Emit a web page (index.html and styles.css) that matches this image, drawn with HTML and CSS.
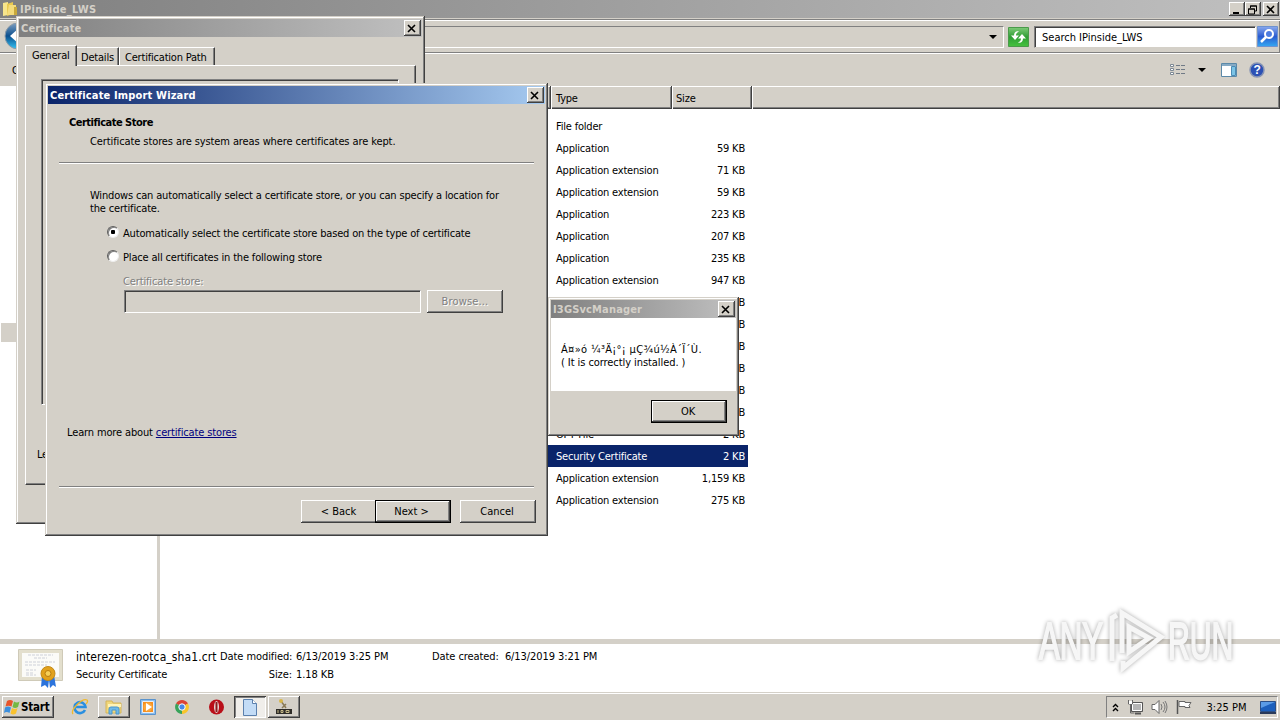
FILE: index.html
```html
<!DOCTYPE html>
<html lang="en">
<head>
    <meta charset="UTF-8">
    <title>IPinside_LWS</title>
    <link rel="stylesheet" href="styles.css">
</head>
<body>
    <div class="explorer">
        <div class="titlebar inactive main-title">
            <svg class="folder" width="17" height="16" viewBox="0 0 17 16"><path d="M1 2l5-1v13l-5 1z" fill="#f7e58b"/><path d="M5 3l6-2v12l-6 2z" fill="#e9c94f"/><path d="M7 4h7v10H5z" fill="#f4dc7c"/><path d="M12 6h3v8h-3z" fill="#c9a93b"/></svg>
            <span class="title">IPinside_LWS</span>
            <button class="cap"><svg width="12" height="10"><path d="M2 8h6" stroke="#000" stroke-width="2"/></svg></button>
            <button class="cap"><svg width="12" height="10"><path d="M3.5 3V1h6v5H8M3 1h7M1.500 4v5h6V4zM1 4h7" fill="none" stroke="#000"/></svg></button>
            <button class="cap last"><svg width="12" height="10"><path d="M2 1l7 7M9 1l-7 7" stroke="#000" stroke-width="1.600"/></svg></button>
        </div>
        <div class="address">
            <svg class="back" width="34" height="34" viewBox="0 0 34 34"><defs><linearGradient id="bk" x2="0" y2="1"><stop offset="0" stop-color="#7f9fc0"/><stop offset=".5" stop-color="#0b4f8e"/><stop offset="1" stop-color="#35c3f3"/></linearGradient></defs><circle cx="17" cy="17" r="13" fill="url(#bk)" stroke="#8a9aa8"/><path d="M18 9l-9 8 9 8v-5h8v-6h-8z" fill="#fff"/></svg>
            <div class="path"><i class="arrow"></i></div>
            <svg class="refresh" width="21" height="20" viewBox="0 0 21 20"><defs><linearGradient id="gr" x2="0" y2="1"><stop offset="0" stop-color="#7fca78"/><stop offset=".5" stop-color="#2f9e35"/><stop offset="1" stop-color="#45c23e"/></linearGradient></defs><path d="M.5.5h20v19H.5z" fill="url(#gr)" stroke="#4a9a4a"/><path d="M11 4.500C8 3.500 6 5.500 6 8.500H3l4 4.500 4-4.500H8c0-2 1-3 3-4zM10 15.500c3 1 5-1 5-4h3l-4-4.500-4 4.500h3c0 2-1 3-3 4z" fill="#fff"/></svg>
            <div class="search">Search IPinside_LWS</div>
            <svg class="lens" width="21" height="22" viewBox="0 0 21 22"><defs><linearGradient id="bl" x2="0" y2="1"><stop offset="0" stop-color="#8aa9ee"/><stop offset=".5" stop-color="#2a5bd0"/><stop offset="1" stop-color="#35a8f2"/></linearGradient></defs><path d="M.5.500h20v20H.5z" fill="url(#bl)" stroke="#6e92cf"/><circle cx="12" cy="8" r="4" fill="#4d7ce0" stroke="#fff" stroke-width="2"/><path d="M9 11l-5 5" stroke="#fff" stroke-width="2.500"/></svg>
        </div>
        <div class="toolbar">
            <span class="organize">Organize</span>
            <svg width="16" height="14" viewBox="0 0 16 14"><path d="M.5 1.500h3v2h-3zM.5 5.500h3v2h-3zM.5 9.500h3v2h-3z" fill="#fff" stroke="#7c8894"/><path d="M6 2.500h4M11 2.500h4M6 6.500h4M11 6.500h4M6 10.500h4M11 10.500h4" stroke="#707a86"/></svg>
            <i class="arrow"></i>
            <svg class="preview" width="16" height="14" viewBox="0 0 16 14"><path d="M.5.500h15v13H.5z" fill="#fff" stroke="#5b89a8"/><path d="M1 1h14v2H1z" fill="#86aac4"/><path d="M10.500 3.500h4v9h-4z" fill="#7cc4e6" stroke="#4a8bb5"/></svg>
            <svg class="help" width="16" height="16" viewBox="0 0 16 16"><circle cx="8" cy="8" r="7" fill="#2b50b4" stroke="#8794b4" stroke-width="1.500"/><text x="8" y="12" text-anchor="middle" class="qm">?</text></svg>
        </div>
        <div class="main">
            <div class="nav"><div class="navsel"></div></div>
            <div class="list">
                <div class="thead"><div class="th name"></div><div class="th type">Type</div><div class="th size">Size</div><div class="th rest"></div></div>
                <div class="rows">
                    <div class="row"><span>File folder</span></div>
                    <div class="row"><span>Application</span><b>59 KB</b></div>
                    <div class="row"><span>Application extension</span><b>71 KB</b></div>
                    <div class="row"><span>Application extension</span><b>59 KB</b></div>
                    <div class="row"><span>Application</span><b>223 KB</b></div>
                    <div class="row"><span>Application</span><b>207 KB</b></div>
                    <div class="row"><span>Application</span><b>235 KB</b></div>
                    <div class="row"><span>Application extension</span><b>947 KB</b></div>
                    <div class="row"><b>KB</b></div>
                    <div class="row"><b>KB</b></div>
                    <div class="row"><b>KB</b></div>
                    <div class="row"><b>KB</b></div>
                    <div class="row"><b>KB</b></div>
                    <div class="row"><b>KB</b></div>
                    <div class="row"><span>OPT File</span><b>2 KB</b></div>
                    <div class="row selected"><span>Security Certificate</span><b>2 KB</b></div>
                    <div class="row"><span>Application extension</span><b>1,159 KB</b></div>
                    <div class="row"><span>Application extension</span><b>275 KB</b></div>
                </div>
            </div>
        </div>
        <div class="details">
            <svg class="cert-icon" width="48" height="42" viewBox="0 0 48 42"><path d="M1.500 1.500h44v31h-44z" fill="#e3dfcd" stroke="#cfcab8"/><path d="M5 5h37v24H5z" fill="#fbfbf8"/><path d="M11 7h25M17 10h13M8 14h30M8 17h22M9 22h10M9 25h7M9 27h10" stroke="#ced1d9" stroke-dasharray="3 1"/><path d="M25 28l-1 11 4-2 3 3 1-8 1 8 3-3 3 2-2-12z" fill="#2c74dc"/><circle cx="31" cy="25.500" r="7" fill="#e2a21d" stroke="#c38a18"/><circle cx="31" cy="25.500" r="3" fill="#f6cf58" stroke="#b87c10"/></svg>
            <div class="d1"><div class="fname">interezen-rootca_sha1.crt</div><div>Security Certificate</div></div>
            <div class="d2"><span>Date modified:</span><span>6/13/2019 3:25 PM</span><span>Size:</span><span>1.18 KB</span></div>
            <div class="d3">Date created:&nbsp; 6/13/2019 3:21 PM</div>
        </div>
    </div>

    <div class="window cert">
        <div class="titlebar inactive"><span class="title">Certificate</span><button class="cap"><svg width="12" height="10"><path d="M2 1l7 7M9 1l-7 7" stroke="#000" stroke-width="1.600"/></svg></button></div>
        <div class="tabs"><div class="tab on">General</div><div class="tab">Details</div><div class="tab wide">Certification Path</div></div>
        <div class="panel"><div class="sunken"></div><p>Learn more about</p></div>
    </div>

    <div class="window wizard">
        <div class="titlebar active"><span class="title">Certificate Import Wizard</span><button class="cap"><svg width="12" height="10"><path d="M2 1l7 7M9 1l-7 7" stroke="#000" stroke-width="1.600"/></svg></button></div>
        <h2>Certificate Store</h2>
        <p class="sub">Certificate stores are system areas where certificates are kept.</p>
        <div class="rule"></div>
        <p class="intro">Windows can automatically select a certificate store, or you can specify a location for<br>the certificate.</p>
        <div class="option"><i class="radio checked"></i><span>Automatically select the certificate store based on the type of certificate</span></div>
        <div class="option"><i class="radio"></i><span>Place all certificates in the following store</span></div>
        <p class="disabled label">Certificate store:</p>
        <div class="field"><div class="input"></div><button class="btn disabled">Browse...</button></div>
        <p class="learn">Learn more about <a>certificate stores</a></p>
        <div class="rule"></div>
        <div class="buttons"><button class="btn">&lt; Back</button><button class="btn default">Next &gt;</button><button class="btn cancel">Cancel</button></div>
    </div>

    <div class="window msgbox">
        <div class="titlebar inactive"><span class="title">I3GSvcManager</span><button class="cap"><svg width="12" height="10"><path d="M2 1l7 7M9 1l-7 7" stroke="#000" stroke-width="1.600"/></svg></button></div>
        <div class="message"><span class="garbled">Á¤»ó ¼³Ä¡°¡ µÇ¾ú½À´Ï´Ù.</span><br>( It is correctly installed. )</div>
        <div class="foot"><button class="btn default">OK</button></div>
    </div>

    <svg class="watermark" width="230" height="76" viewBox="0 0 230 76">
        <g>
            <text transform="translate(8 56) scale(.6 1)">ANY</text>
            <text transform="translate(137 56) scale(.58 1)">RUN</text>
            <path d="M81 58V15l5-3M91 50V10l39 24-38 31V58"/>
            <path d="M98 49V24l20 11z"/>
        </g>
    </svg>

    <div class="taskbar">
        <button class="start"><svg width="16" height="16" viewBox="0 0 16 16"><path d="M3 2q3-2 6 0L7.500 7.500Q4.500 6 1.500 7.500z" fill="#e8542a"/><path d="M10 2.500q3 2 5.500 0L14 8q-3 2-5.500 0z" fill="#74b843"/><path d="M1 8.500q3-2 6 0L5.500 14q-3-2-5.500 0z" fill="#3c8fdd"/><path d="M8 9q3 2 5.500 0l-1.500 5.500q-3 2-5.500 0z" fill="#f9c22e"/></svg>Start</button>
        <div class="task ie"><svg width="18" height="18" viewBox="0 0 18 18"><path d="M14 12a5.500 5.500 0 1 1 .5-3H5" fill="none" stroke="#2a8fe0" stroke-width="2.600"/><path d="M2 16C-1 12 11 0 16 2c1 1 0 3-1 4" fill="none" stroke="#f0b92c" stroke-width="1.300"/></svg></div>
        <div class="task raised"><svg width="18" height="18" viewBox="0 0 18 18"><path d="M1 3h6l1 2h8v10H1z" fill="#f0d77b" stroke="#d4b45a"/><path d="M3 6h13v3H3z" fill="#fff3b8"/><path d="M4 16v-5q0-2 2-2h6q2 0 2 2v5h-3v-4H7v4z" fill="#6fb9e8" stroke="#4b95cc"/></svg></div>
        <div class="task"><svg width="16" height="16" viewBox="0 0 16 16"><path d="M.5.500h15v15H.5z" fill="#8abdee" stroke="#5a93cc"/><path d="M2.500 2.500h11v11h-11z" fill="#f78f1e" stroke="#e8eef5"/><circle cx="8" cy="8" r="4.500" fill="#f9a73e"/><path d="M6 4l6 4-6 4z" fill="#fff"/></svg></div>
        <div class="task"><svg width="14" height="14" viewBox="0 0 14 14"><path d="M7 7L1 3.500A7 7 0 0 1 13 3.500z" fill="#dc4335"/><path d="M7 7l6-3.500A7 7 0 0 1 7 14z" fill="#f8c52c"/><path d="M7 7v7A7 7 0 0 1 1 3.500z" fill="#38a35a"/><circle cx="7" cy="7" r="3.200" fill="#4788e8" stroke="#fff"/></svg></div>
        <div class="task"><svg width="15" height="16" viewBox="0 0 15 16"><circle cx="7.500" cy="8" r="7.500" fill="#b90f19"/><ellipse cx="7.500" cy="8" rx="2.500" ry="6" fill="#e8d8d4"/><path d="M7.500 3v10" stroke="#8d1a1e" stroke-width="2"/></svg></div>
        <div class="task pressed"><svg width="14" height="17" viewBox="0 0 14 17"><path d="M.5.500h9l4 4v12H.5z" fill="#c3dcf6" stroke="#5b80ad"/><path d="M9.500.500v4h4" fill="#fff" stroke="#5b80ad"/></svg></div>
        <div class="task raised"><svg width="18" height="18" viewBox="0 0 18 18"><path d="M6 3l5 7M11 6l-4 4" stroke="#8a7b58" stroke-width="1.500"/><circle cx="6" cy="3" r="2" fill="#d7b64a"/><path d="M1 11h16v5H1z" fill="#2e2c28"/><path d="M3 12v3M6 12.500h2v2H6zM11 12.500h3v2h-3z" stroke="#c9bc8b" fill="none"/></svg></div>
        <div class="tray">
            <svg class="chev" width="7" height="9" viewBox="0 0 7 9"><path d="M1 4l2.500-2.500L6 4M1 8l2.500-2.500L6 8" fill="none" stroke="#000" stroke-width="1.400"/></svg>
            <svg width="16" height="16" viewBox="0 0 16 16"><path d="M4.500 3.500h11v9h-11z" fill="#aaa" stroke="#555"/><path d="M5.500 4.500h9v7h-9z" fill="#b5b5b5" stroke="#fff"/><path d="M8 14.500h6" stroke="#555" stroke-width="2"/><path d="M1.500 1v4h4V1M3.500 5v9h4" fill="none" stroke="#666"/><path d="M2 2h3v3H2z" fill="#fff"/></svg>
            <svg width="17" height="16" viewBox="0 0 17 16"><path d="M1 5.500h3l4-4v13l-4-4H1z" fill="#fff" stroke="#666"/><path d="M10 5q2 3 0 6M12 3q4 5 0 10M14 2q4 6 0 12" fill="none" stroke="#777"/></svg>
            <svg width="17" height="16" viewBox="0 0 17 16"><path d="M1.500 1v14" stroke="#555" stroke-width="1.500"/><path d="M3 2.500h6v1h6l-2 3 1 2H9v-1H3z" fill="#fff" stroke="#666"/></svg>
            <span class="clock">3:25 PM</span>
            <svg class="desk" width="16" height="13" viewBox="0 0 16 13"><path d="M.5.500h15v10H.5z" fill="#1c5fbc" stroke="#2b4f87"/><path d="M1 1h14L1 7z" fill="#5a9be6"/><path d="M0 11h16v2H0z" fill="#2a3a5a"/></svg>
        </div>
    </div>
</body>
</html>
```
FILE: styles.css
```css
* {
    box-sizing: border-box;
}
body {
    margin: 0;
    width: 1280px;
    height: 720px;
    overflow: hidden;
    position: relative;
    background: #fff;
    color: #000;
    font: 11px/13px "DejaVu Sans Condensed", "DejaVu Sans", sans-serif;
    letter-spacing: -0.2px;
}
p, h2 {
    margin: 0;
}
svg {
    display: block;
    flex: none;
}
button {
    font: inherit;
    letter-spacing: inherit;
    color: inherit;
    padding: 0;
    border: 0;
}
.titlebar {
    display: flex;
    align-items: center;
    height: 18px;
    padding: 0 1px;
}
.titlebar.inactive {
    background: linear-gradient(90deg, #808080, #c0c0c0);
    color: #d4d0c8;
}
.titlebar.active {
    background: linear-gradient(90deg, #0a246a, #a6caf0);
    color: #fff;
}
.title {
    flex: 1;
    font-weight: bold;
    letter-spacing: 0.16px;
    white-space: nowrap;
}
.cap {
    width: 16px;
    height: 14px;
    padding: 1px 0 0 2px;
    background: #d4d0c8;
    box-shadow: inset -1px -1px #404040, inset 1px 1px #fff, inset -2px -2px #808080;
}
.arrow {
    border: 4px solid transparent;
    border-top-color: #000;
    border-bottom: 0;
}

/* explorer */
.explorer {
    height: 693px;
    display: flex;
    flex-direction: column;
}
.main-title {
    padding-left: 2px;
}
.main-title .title {
    letter-spacing: 0.3px;
}
.main-title .cap.last {
    margin-left: 2px;
}
.folder {
    margin-right: 1px;
}
.address {
    height: 36px;
    display: flex;
    align-items: center;
    background: #d4d0c8;
    border-top: 1px solid #d4d0c8;
    border-bottom: 1px solid #fff;
    box-shadow: inset 0 1px #808080, inset 0 2px #fff, inset 0 -1px #808080, inset -1px 0 #808080;
    padding-right: 2px;
}
.back {
    margin-left: 1px;
}
.path {
    flex: 1;
    height: 22px;
    margin: 2px 4px 0 0;
    padding-right: 6px;
    display: flex;
    align-items: center;
    justify-content: flex-end;
    border: 1px solid #808080;
    border-right-color: #fff;
    border-bottom-color: #fff;
}
.refresh {
    margin: 1px 5px 0 0;
}
.search {
    width: 222px;
    height: 22px;
    margin: 2px 1px 0 0;
    padding: 4px 7px;
    letter-spacing: 0;
    background: #fff;
    border: 1px solid #808080;
    border-right-color: #fff;
    border-bottom-color: #d4d0c8;
    box-shadow: inset 1px 1px #404040;
}
.lens {
    margin-top: 2px;
}
.toolbar {
    height: 32px;
    display: flex;
    align-items: center;
    background: #d4d0c8;
    padding: 0 15px 0 12px;
}
.organize {
    flex: 1;
}
.toolbar .arrow {
    margin: 0 15px 0 12px;
}
.preview {
    margin-right: 12px;
}
.qm {
    font: bold 12px "Liberation Sans", sans-serif;
    fill: #fff;
}
.main {
    height: 553px;
    display: flex;
}
.nav {
    width: 160px;
    border-right: 3px solid #d4d0c8;
    padding: 237px 0 0 1px;
}
.navsel {
    height: 19px;
    background: #d4d0c8;
}
.list {
    flex: 1;
}
.thead {
    height: 23px;
    display: flex;
    background: #d4d0c8;
}
.th {
    padding: 6px 5px;
    border-right: 1px solid #404040;
    box-shadow: inset 0 1px #fff, inset 1px 0 #fff, inset 0 -1px #404040, inset 0 -2px #808080, inset -1px 0 #808080;
}
.th.name {
    width: 391px;
}
.th.type {
    width: 121px;
}
.th.size {
    width: 80px;
    padding-left: 4px;
}
.th.rest {
    flex: 1;
}
.rows {
    width: 588px;
    padding-top: 6px;
}
.row {
    height: 22px;
    padding: 5px 3px 0 396px;
    display: flex;
    white-space: nowrap;
}
.row b {
    margin-left: auto;
    font-weight: normal;
}
.row.selected {
    background: #0a246a;
    color: #fff;
}
.details {
    flex: 1;
    display: flex;
    border-top: 5px solid #d4d0c8;
    border-bottom: 1px solid #d4d0c8;
    padding: 4px 0 0 17px;
    line-height: 18px;
    white-space: nowrap;
}
.cert-icon {
    margin: 0 11px 0 0;
}
.d1 {
    width: 144px;
}
.fname {
    font-size: 12px;
    letter-spacing: 0.1px;
}
.d2 {
    display: grid;
    grid-template-columns: 72px 132px;
    grid-template-rows: 18px 18px;
    column-gap: 4px;
}
.d2 span:nth-child(odd) {
    text-align: right;
}
.d2, .d3 {
    letter-spacing: -0.08px;
    margin-right: 4px;
}

/* dialogs */
.window {
    position: absolute;
    background: #d4d0c8;
    padding: 3px;
    box-shadow: inset -1px -1px #404040, inset 1px 1px #d4d0c8, inset -2px -2px #808080, inset 2px 2px #fff;
}
.window .cap {
    width: 17px;
    height: 16px;
    padding: 2px 0 0 2px;
}
.cert {
    left: 16px;
    top: 16px;
    width: 409px;
    height: 508px;
}
.cert .title {
    padding-left: 1px;
}
.tabs {
    display: flex;
    align-items: flex-end;
    height: 28px;
    padding-left: 6px;
}
.tab {
    height: 18px;
    width: 42px;
    padding: 3px 0 0 4px;
    white-space: nowrap;
    border-top: 1px solid #fff;
    border-right: 1px solid #404040;
    box-shadow: inset -1px 0 #808080;
}
.tab.on {
    width: 52px;
    height: 21px;
    padding: 3px 0 0 6px;
    margin-bottom: -1px;
    background: #d4d0c8;
    border-left: 1px solid #fff;
    position: relative;
}
.tab.wide {
    width: 96px;
    padding-left: 5px;
    border-left: 1px solid #fff;
}
.panel {
    margin: 0 6px;
    height: 420px;
    border: 1px solid #fff;
    border-right-color: #404040;
    border-bottom-color: #404040;
    box-shadow: inset -1px -1px #808080;
    padding: 13px 16px 0 15px;
}
.sunken {
    height: 326px;
    border: 1px solid #808080;
    border-bottom-color: #fff;
    border-right-color: #fff;
    box-shadow: inset 1px 1px #404040;
}
.panel p {
    margin: 43px 0 0 -4px;
}
.wizard {
    left: 45px;
    top: 83px;
    width: 503px;
    height: 453px;
    letter-spacing: -0.14px;
}
.wizard .title, .msgbox .title {
    padding-left: 1px;
}
.wizard h2 {
    font-size: 11px;
    line-height: 13px;
    letter-spacing: -0.5px;
    margin: 12px 0 6px 21px;
}
.sub, .intro {
    margin-left: 42px;
    white-space: nowrap;
}
.sub {
    letter-spacing: -0.1px;
}
.intro, .option {
    letter-spacing: -0.17px;
}
.rule {
    height: 2px;
    margin: 14px 11px 25px 11px;
    background: #808080;
    border-bottom: 1px solid #fff;
}
.option {
    height: 24px;
    margin-left: 59px;
    display: flex;
    align-items: center;
    white-space: nowrap;
}
.intro + .option {
    margin-top: 6px;
}
.radio {
    width: 12px;
    height: 12px;
    margin: -2px 4px 0 0;
    border-radius: 50%;
    background: #fff;
    border: 1px solid;
    border-color: #606060 #eee #eee #606060;
    box-shadow: inset 1px 1px #808080;
}
.radio.checked {
    background: radial-gradient(circle, #000 0 2px, #fff 2.5px);
}
.disabled {
    color: #808080;
    text-shadow: 1px 1px #fff;
}
.label {
    margin: 6px 0 2px 75px;
}
.field {
    display: flex;
    margin-left: 76px;
}
.input {
    width: 297px;
    height: 23px;
    margin-right: 6px;
    border: 1px solid #808080;
    border-right-color: #fff;
    border-bottom-color: #fff;
    box-shadow: inset 1px 1px #404040;
}
.btn {
    width: 76px;
    height: 23px;
    background: #d4d0c8;
    box-shadow: inset -1px -1px #404040, inset 1px 1px #fff, inset -2px -2px #808080;
}
.btn.disabled {
    letter-spacing: 0.15px;
}
.btn.default {
    box-shadow: inset 0 0 0 1px #000, inset -2px -2px #404040, inset 2px 2px #fff, inset -3px -3px #808080;
}
.learn {
    margin: 113px 0 0 19px;
}
.learn a {
    color: #00007f;
    text-decoration: underline;
}
.learn + .rule {
    margin-top: 47px;
    margin-bottom: 12px;
}
.buttons {
    display: flex;
    justify-content: flex-end;
    padding-right: 9px;
    letter-spacing: 0;
}
.buttons .btn {
    padding-right: 1px;
}
.buttons .default {
    margin-left: -2px;
    padding-right: 3px;
}
.buttons .cancel {
    margin-left: 9px;
    padding-right: 2px;
}
.msgbox {
    left: 548px;
    top: 297px;
    width: 191px;
    height: 139px;
}
.message {
    height: 73px;
    padding: 25px 0 0 10px;
    background: #fff;
    letter-spacing: -0.07px;
    white-space: nowrap;
}
.garbled {
    letter-spacing: 0.33px;
}
.foot {
    padding: 9px 9px 0 0;
    display: flex;
    justify-content: flex-end;
}
.foot .btn {
    padding-right: 2px;
}

.watermark {
    position: absolute;
    left: 1031px;
    top: 603px;
}
.watermark g {
    filter: drop-shadow(0 0 2px rgba(0, 0, 0, 0.35));
}
.watermark text {
    font: 52px "Liberation Sans", sans-serif;
    fill: #f6f6f6;
    stroke: #f6f6f6;
    stroke-width: 2px;
    letter-spacing: 0;
}
.watermark path {
    fill: none;
    stroke: #f6f6f6;
    stroke-width: 5px;
}

/* taskbar */
.taskbar {
    height: 27px;
    display: flex;
    align-items: center;
    background: #d4d0c8;
    border-top: 1px solid #fff;
    padding: 0 2px;
}
.start {
    width: 52px;
    height: 22px;
    margin-right: 10px;
    display: flex;
    align-items: center;
    gap: 1px;
    padding-left: 2px;
    font-weight: bold;
    font-size: 11.5px;
    background: #d4d0c8;
    box-shadow: inset -1px -1px #404040, inset 1px 1px #fff, inset -2px -2px #808080;
}
.task {
    width: 32px;
    height: 22px;
    margin-right: 2px;
    display: flex;
    align-items: center;
    justify-content: center;
}
.raised {
    box-shadow: inset -1px -1px #404040, inset 1px 1px #fff, inset -2px -2px #808080;
}
.pressed {
    background: #f0eeea;
    box-shadow: inset 1px 1px #404040, inset -1px -1px #fff, inset 2px 2px #808080;
}
.tray {
    width: 172px;
    height: 22px;
    margin-left: auto;
    padding: 0 1px 0 5px;
    display: flex;
    align-items: center;
    gap: 8px;
    border: 1px solid #808080;
    border-right-color: #fff;
    border-bottom-color: #fff;
}
.clock {
    margin: 0 auto;
    white-space: nowrap;
    letter-spacing: 0;
}
```
